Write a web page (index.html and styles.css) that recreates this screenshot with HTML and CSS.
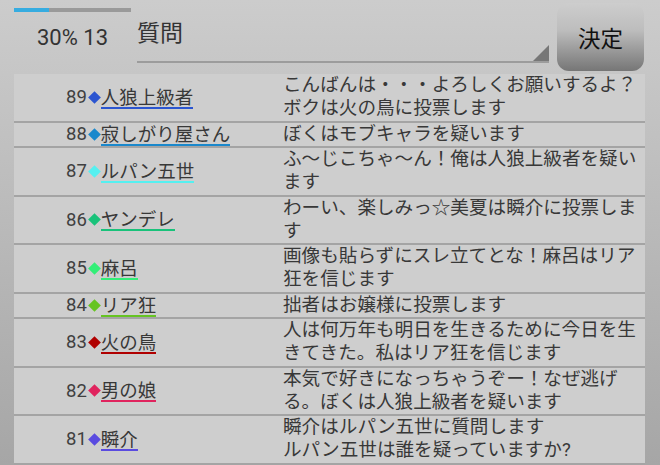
FILE: index.html
```html
<!DOCTYPE html>
<html lang="ja">
<head>
    <meta charset="UTF-8">
    <title>人狼ログ</title>
    <link rel="stylesheet" href="styles.css">
</head>
<body>
    <header class="top-bar">
        <div class="status">
            <div class="progress"><div class="progress-fill" style="width: 30%"></div></div>
            <div class="status-label">30% 13</div>
        </div>
        <div class="spinner">質問</div>
        <button class="submit-btn">決定</button>
    </header>

    <main class="log">
        <div class="row">
            <div class="who"><span class="num">89</span><span class="mark" style="background: #2b55d0"></span><span class="name" style="border-color: #2b55d0">人狼上級者</span></div>
            <div class="msg">こんばんは・・・よろしくお願いするよ？ボクは火の鳥に投票します</div>
        </div>
        <div class="row">
            <div class="who"><span class="num">88</span><span class="mark" style="background: #1a88cc"></span><span class="name" style="border-color: #1a88cc">寂しがり屋さん</span></div>
            <div class="msg">ぼくはモブキャラを疑います</div>
        </div>
        <div class="row">
            <div class="who"><span class="num">87</span><span class="mark" style="background: #55f0f0"></span><span class="name" style="border-color: #55f0f0">ルパン五世</span></div>
            <div class="msg">ふ〜じこちゃ〜ん！俺は人狼上級者を疑います</div>
        </div>
        <div class="row">
            <div class="who"><span class="num">86</span><span class="mark" style="background: #19c27a"></span><span class="name" style="border-color: #19c27a">ヤンデレ</span></div>
            <div class="msg">わーい、楽しみっ☆美夏は瞬介に投票します</div>
        </div>
        <div class="row">
            <div class="who"><span class="num">85</span><span class="mark" style="background: #33ee77"></span><span class="name" style="border-color: #33ee77">麻呂</span></div>
            <div class="msg">画像も貼らずにスレ立てとな！麻呂はリア狂を信じます</div>
        </div>
        <div class="row">
            <div class="who"><span class="num">84</span><span class="mark" style="background: #66c422"></span><span class="name" style="border-color: #66c422">リア狂</span></div>
            <div class="msg">拙者はお嬢様に投票します</div>
        </div>
        <div class="row">
            <div class="who"><span class="num">83</span><span class="mark" style="background: #b00000"></span><span class="name" style="border-color: #b00000">火の鳥</span></div>
            <div class="msg">人は何万年も明日を生きるために今日を生きてきた。私はリア狂を信じます</div>
        </div>
        <div class="row">
            <div class="who"><span class="num">82</span><span class="mark" style="background: #e0245e"></span><span class="name" style="border-color: #e0245e">男の娘</span></div>
            <div class="msg">本気で好きになっちゃうぞー！なぜ逃げる。ぼくは人狼上級者を疑います</div>
        </div>
        <div class="row">
            <div class="who"><span class="num">81</span><span class="mark" style="background: #5a4be0"></span><span class="name" style="border-color: #5a4be0">瞬介</span></div>
            <div class="msg">瞬介はルパン五世に質問します<br>ルパン五世は誰を疑っていますか?</div>
        </div>
    </main>
</body>
</html>
```

FILE: styles.css
```css
* {
    margin: 0;
    padding: 0;
    box-sizing: border-box;
}

body {
    width: 660px;
    height: 465px;
    overflow: hidden;
    font-family: Roboto, "Noto Sans CJK JP", sans-serif;
    color: #383838;
    background: linear-gradient(to bottom, #cccccc, #a6a6a6);
}

/* Header */
.top-bar {
    display: flex;
    align-items: flex-start;
    height: 74px;
    padding-left: 14px;
}

.status {
    width: 117px;
    padding-top: 8px;
}

.progress {
    height: 4px;
    background: #9a9a9a;
}

.progress-fill {
    height: 100%;
    background: #36ace0;
}

.status-label {
    margin-top: 13px;
    font-size: 22px;
    line-height: 25px;
    text-align: center;
    color: #333;
}

.spinner {
    position: relative;
    width: 412px;
    height: 63px;
    margin-left: 6px;
    padding-top: 21px;
    font-size: 23px;
    line-height: 25px;
    color: #333;
    border-bottom: 2px solid #9c9c9c;
}

.spinner::after {
    content: "";
    position: absolute;
    right: 0;
    bottom: 0;
    width: 16px;
    height: 16px;
    background: #777;
    clip-path: polygon(100% 0, 100% 100%, 0 100%);
}

.submit-btn {
    width: 87px;
    height: 68px;
    margin: 3px 0 0 8px;
    border: none;
    border-radius: 12px;
    background: linear-gradient(to bottom, #cdcdcd, #bdbdbd 40%, #767676);
    font-family: "Noto Sans CJK JP", sans-serif;
    font-size: 22.5px;
    color: #111;
}

/* Log list */
.log {
    margin: 0 15px 0 14px;
    background: #cecece;
}

.row {
    display: flex;
    border-bottom: 2px solid #a4a4a4;
    padding-bottom: 0.5px;
}

.who {
    width: 269px;
    flex-shrink: 0;
    display: flex;
    align-items: center;
    padding-left: 52px;
}

.num {
    font-size: 18.5px;
    color: #404040;
}

.mark {
    width: 9px;
    height: 9px;
    margin: 0 2px 0 3px;
    transform: rotate(45deg);
}

.name {
    font-family: "Noto Sans CJK JP", sans-serif;
    font-size: 18.5px;
    line-height: 21px;
    color: #383838;
    border-bottom: 2px solid;
}

.msg {
    flex: 1;
    font-family: Roboto, "Noto Sans CJK JP", sans-serif;
    font-size: 18.6px;
    line-height: 23px;
    color: #383838;
}
```
